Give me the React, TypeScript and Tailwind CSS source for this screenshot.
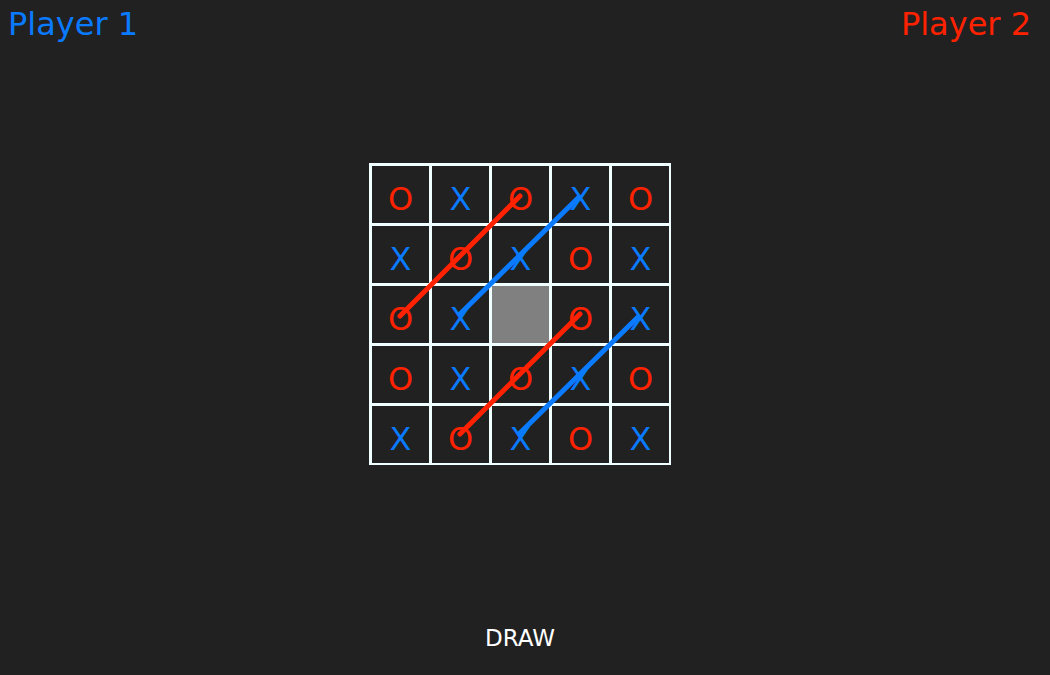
const board = [
  ["O", "X", "O", "X", "O"],
  ["X", "O", "X", "O", "X"],
  ["O", "X", "", "O", "X"],
  ["O", "X", "O", "X", "O"],
  ["X", "O", "X", "O", "X"],
]

// winning strikes, coords relative to the board
const lines = [
  { x1: 151, y1: 33, x2: 31, y2: 153, color: "#ff2200" },
  { x1: 209, y1: 35, x2: 91, y2: 151, color: "#0a7aff" },
  { x1: 211, y1: 151, x2: 91, y2: 271, color: "#ff2200" },
  { x1: 269, y1: 154, x2: 151, y2: 270, color: "#0a7aff" },
]

export default function App() {
  return (
    <div
      className="h-[675px] w-full bg-[#212121] flex flex-col pr-[10px]"
      style={{ fontFamily: '"DejaVu Sans", Verdana, sans-serif' }}
    >
      <div className="flex justify-between pl-[8px] pr-[9px] h-[48px] items-center text-[32px] leading-none">
        <span className="text-[#0a7aff]">Player 1</span>
        <span className="text-[#ff2200]">Player 2</span>
      </div>

      <div className="flex justify-center mt-[115px]">
        <div className="relative">
          <div className="grid grid-cols-[repeat(5,57px)] gap-[3px] pt-[3px] pl-[3px] pr-[2px] pb-[2px] bg-[#f0ffff]">
            {board.flat().map((v, i) => (
              <div
                key={i}
                className={
                  "h-[57px] flex items-center justify-center pt-[8px] text-[32px] " +
                  (v === "" ? "bg-[#808080]" : "bg-[#212121]") +
                  (v === "X" ? " text-[#0a7aff]" : " text-[#ff2200]")
                }
              >
                {v}
              </div>
            ))}
          </div>
          <svg className="absolute inset-0 pointer-events-none" width="302" height="302">
            {lines.map((l, i) => (
              <line
                key={i}
                x1={l.x1}
                y1={l.y1}
                x2={l.x2}
                y2={l.y2}
                stroke={l.color}
                strokeWidth="5"
                strokeLinecap="round"
              />
            ))}
          </svg>
        </div>
      </div>

      <div className="mt-auto mb-[20px] text-center text-white text-[23px]">DRAW</div>
    </div>
  )
}
